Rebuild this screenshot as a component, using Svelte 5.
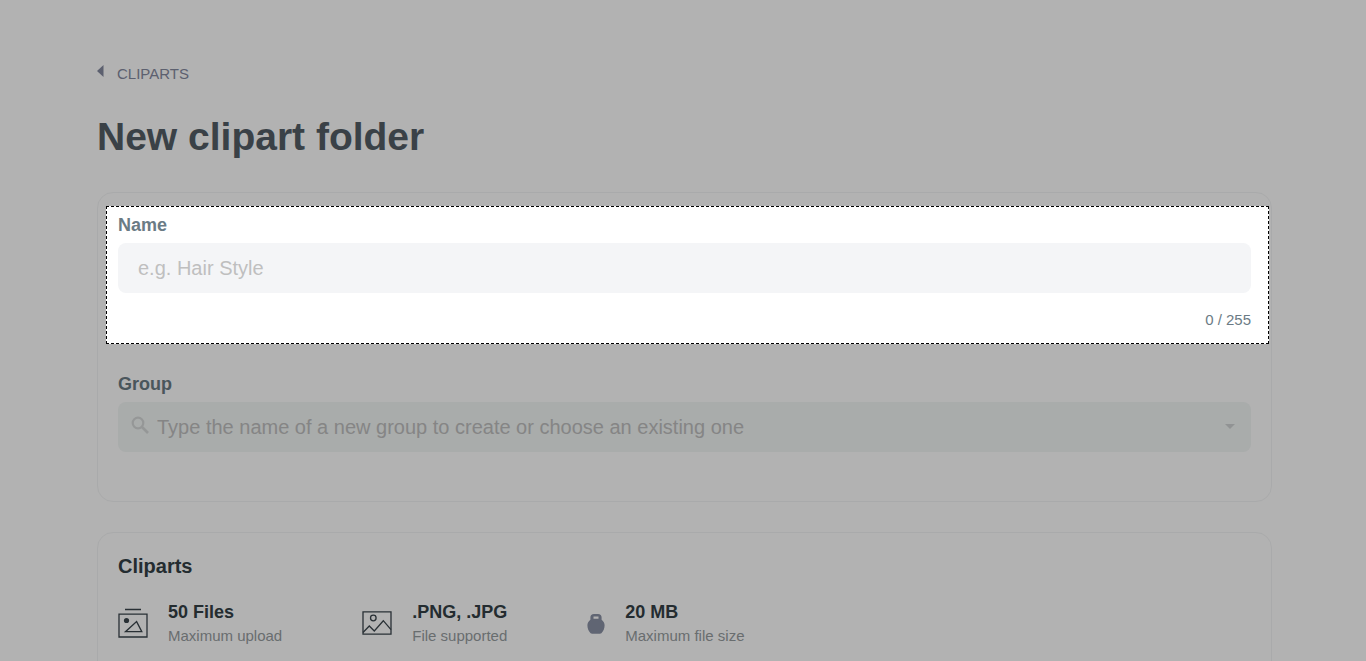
<script>
	let name = '';
	let group = '';
	const maxLength = 255;
</script>

<main>
	<a class="back" href="/cliparts">
		<svg width="7" height="12" viewBox="0 0 7 12"><path d="M6.5 0v12L0 6z" fill="currentColor" /></svg>
		<span>CLIPARTS</span>
	</a>

	<h1>New clipart folder</h1>

	<section class="card details">
		<!-- highlighted step, its shadow dims the rest of the page -->
		<div class="spotlight">
			<label for="name">Name</label>
			<input id="name" class="field" type="text" placeholder="e.g. Hair Style" maxlength={maxLength} bind:value={name} />
			<p class="counter">{name.length} / {maxLength}</p>
		</div>

		<div class="group">
			<label for="group">Group</label>
			<div class="field combo">
				<svg width="18" height="18" viewBox="0 0 18 18" fill="none" stroke="#d6d9d9" stroke-width="2.2">
					<circle cx="7" cy="7" r="5.3" />
					<path d="M11 11l6 6" stroke-width="2.6" />
				</svg>
				<input
					id="group"
					type="text"
					placeholder="Type the name of a new group to create or choose an existing one"
					bind:value={group}
				/>
				<button type="button" aria-label="Show groups">
					<svg width="10" height="5" viewBox="0 0 10 5"><path d="M0 0h10L5 5z" fill="#d0d3d4" /></svg>
				</button>
			</div>
		</div>
	</section>

	<section class="card cliparts">
		<h2>Cliparts</h2>
		<ul>
			<li>
				<svg width="30" height="30" viewBox="0 0 30 30" fill="none" stroke="#3b464d" stroke-width="1.3">
					<path d="M7 1.5h16M1 6.2h28v22.8H1z" />
					<path d="M7.5 23.7h16.3L18.6 13.6z" />
					<circle cx="8.5" cy="12.5" r="2.6" fill="#3b464d" stroke="none" />
				</svg>
				<div>
					<strong>50 Files</strong>
					<span>Maximum upload</span>
				</div>
			</li>
			<li>
				<svg width="30" height="24" viewBox="0 0 30 24" fill="none" stroke="#3b464d" stroke-width="1.3">
					<path d="M1 .8h28v22.4H1z" />
					<path d="M1 21.5l6.3-6.5 5 5L21.3 9.7l7.7 9" />
					<circle cx="11.3" cy="7" r="2.8" />
				</svg>
				<div>
					<strong>.PNG, .JPG</strong>
					<span>File supported</span>
				</div>
			</li>
			<li>
				<svg width="18" height="22" viewBox="0 0 18 22" fill="#8a91a5">
					<path
						fill-rule="evenodd"
						d="M7 2h4c2.400 0 3.600 1.400 3.600 3.400v2.300c1.900 1.400 3 3.300 3 5.600 0 3.200-1.200 6-3.200 7.900-.4.300-.9.500-1.500.5H5.100c-.6 0-1.100-.2-1.500-.5C1.600 19.300.4 16.500.4 13.300c0-2.300 1.100-4.200 3-5.600V5.400C3.400 3.400 4.600 2 7 2zM6.500 4.500v2.200h5V4.500z"
					/>
				</svg>
				<div>
					<strong>20 MB</strong>
					<span>Maximum file size</span>
				</div>
			</li>
		</ul>
	</section>
</main>

<style>
	:global(body) {
		background: #fff;
		font-family: 'Liberation Sans', Arial, sans-serif;
	}

	main {
		box-sizing: border-box;
		height: 100vh;
		overflow-y: auto;
		scrollbar-width: none;
		padding: 64px 94px 0 97px;
	}

	.back {
		display: flex;
		align-items: center;
		gap: 13px;
		font-size: 15px;
		line-height: 20px;
		color: #858aa0;
		text-decoration: none;
	}

	.back svg {
		margin-bottom: 6px;
	}

	h1 {
		margin: 28px 0 31px;
		font-size: 39px;
		line-height: 49px;
		color: #535e66;
	}

	.card {
		border: 1px solid #f3f4f5;
		border-radius: 16px;
	}

	.details {
		padding: 13px 2px 49px 8px;
		margin-bottom: 30px;
	}

	.spotlight {
		position: relative;
		z-index: 1;
		padding: 8px 17px 12px 11px;
		border: 1px dashed #000;
		box-shadow: 0 0 0 200vmax rgba(0, 0, 0, 0.3);
	}

	label {
		display: block;
		margin-bottom: 8px;
		font-size: 18px;
		font-weight: bold;
		line-height: 20px;
		color: #6b7b85;
	}

	input {
		border: 0;
		outline: 0;
		font-family: inherit;
		font-size: 20px;
		color: #535e66;
	}

	input::placeholder {
		color: #bfbfbf;
		opacity: 1;
	}

	.field {
		display: block;
		box-sizing: border-box;
		width: 100%;
		height: 50px;
		padding: 0 20px;
		border-radius: 8px;
		background: #f4f5f7;
	}

	.counter {
		margin: 16px 0 0;
		font-size: 15px;
		line-height: 22px;
		text-align: right;
		color: #6b7b85;
	}

	.group {
		padding: 30px 18px 0 12px;
	}

	.combo {
		display: flex;
		align-items: center;
		gap: 8px;
		padding: 0 11px 0 13px;
		background: #f2f6f5;
	}

	.combo > svg {
		margin-bottom: 4px;
	}

	.combo input {
		flex: 1;
		min-width: 0;
		padding: 0;
		background: none;
	}

	.combo button {
		display: flex;
		padding: 4px 5px 6px;
		border: 0;
		background: none;
	}

	.cliparts {
		padding: 20px 20px 40px;
	}

	h2 {
		margin: 0 0 20px;
		font-size: 20px;
		line-height: 26px;
		color: #343f46;
	}

	ul {
		display: flex;
		gap: 80px;
		margin: 0;
		padding: 0;
		list-style: none;
	}

	li {
		display: flex;
		align-items: center;
		gap: 20px;
	}

	strong,
	li span {
		display: block;
	}

	strong {
		font-size: 18px;
		line-height: 26px;
		color: #343f46;
	}

	li span {
		font-size: 15px;
		line-height: 22px;
		color: #979d9f;
	}
</style>
